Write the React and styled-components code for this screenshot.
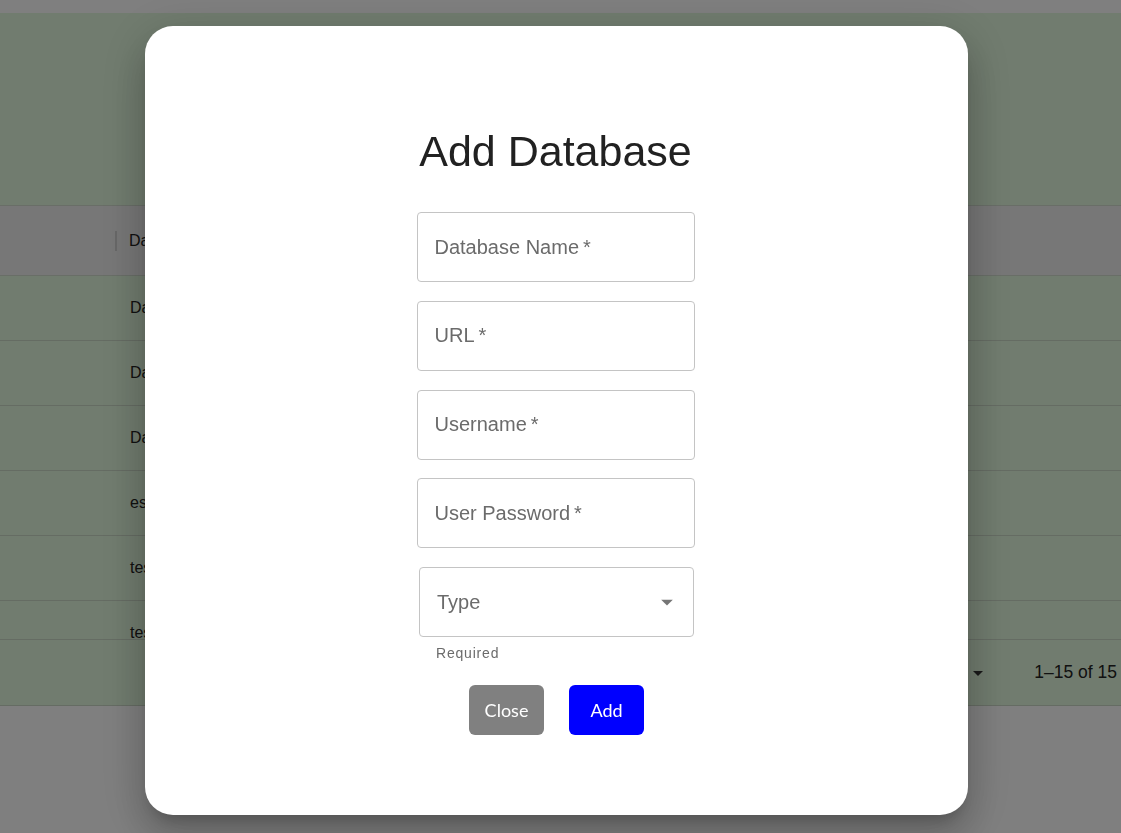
import React from 'react';
import styled, { createGlobalStyle } from 'styled-components';

const GlobalStyle = createGlobalStyle`
  html, body {
    margin: 0;
    padding: 0;
    background: #ffffff;
    font-family: "Liberation Sans", Arial, sans-serif;
    overflow: hidden;
  }
`;

// page behind the dialog
const Page = styled.div`
  width: 1121px;
  height: 833px;
  padding-top: 13px;
  box-sizing: border-box;
`;

const Banner = styled.div`
  height: 192px;
  background: #e2f8de;
`;

const Grid = styled.div`
  display: flex;
  flex-direction: column;
  border-top: 1px solid #d2dccf;
`;

const HeaderRow = styled.div`
  display: flex;
  align-items: center;
  height: 69px;
  background: #efefef;
  border-bottom: 1px solid #d2dccf;
  font-size: 16px;
  color: #222;
`;

const Separator = styled.span`
  width: 2px;
  height: 20px;
  margin-left: 115px;
  margin-right: 12px;
  background: #cfcfcf;
`;

const Body = styled.div`
  height: 363px;
  overflow: hidden;
  background: #e2f8de;
`;

const Row = styled.div`
  display: flex;
  align-items: center;
  height: 64px;
  padding-left: 130px;
  border-bottom: 1px solid #cbd8c7;
  font-size: 16px;
  color: #222;
`;

const Footer = styled.div`
  display: flex;
  align-items: center;
  justify-content: flex-end;
  height: 65px;
  padding-right: 4px;
  background: #e2f8de;
  border-top: 1px solid #cbd8c7;
  border-bottom: 1px solid #cbd8c7;
  font-size: 17.5px;
  color: #222;
`;

const PerPage = styled.div`
  display: flex;
  align-items: center;
  gap: 8px;
  margin-right: 44px;
  font-size: 15px;
`;

// dialog
const Overlay = styled.div`
  position: fixed;
  inset: 0;
  display: flex;
  align-items: flex-start;
  padding: 26px 0 0 145px;
  background: rgba(0, 0, 0, 0.5);
`;

const Modal = styled.div`
  width: 823px;
  height: 789px;
  box-sizing: border-box;
  padding: 100px 2px 0 0;
  display: flex;
  flex-direction: column;
  align-items: center;
  background: #ffffff;
  border-radius: 28px;
  box-shadow: 0 11px 15px -7px rgba(0, 0, 0, 0.2),
    0 24px 38px 3px rgba(0, 0, 0, 0.14), 0 9px 46px 8px rgba(0, 0, 0, 0.12);
`;

const Title = styled.h1`
  margin: 0 0 36px 0;
  font-size: 43px;
  line-height: 50px;
  font-weight: 400;
  color: #212121;
`;

const Field = styled.div`
  width: ${(p) => p.$width || 278}px;
  height: 70px;
  box-sizing: border-box;
  margin-bottom: ${(p) => p.$gap ?? 18.75}px;
  margin-left: ${(p) => p.$shift || 0}px;
  padding: 0 ${(p) => p.$padRight || 20}px 0 17px;
  display: flex;
  align-items: center;
  justify-content: space-between;
  border: 1px solid #c4c4c4;
  border-radius: 4px;
  font-size: 20px;
  color: #6b6b6b;
`;

const Helper = styled.div`
  width: 275px;
  box-sizing: border-box;
  margin-left: 2px;
  padding-left: 17px;
  margin-top: 8px;
  font-size: 14px;
  line-height: 16px;
  letter-spacing: 0.8px;
  color: #6b6b6b;
`;

const Actions = styled.div`
  display: flex;
  gap: 25px;
  margin-left: 2px;
  margin-top: 24px;
`;

const Button = styled.button`
  width: 75px;
  height: 50px;
  border: none;
  border-radius: 6px;
  background: ${(p) => (p.$primary ? '#0000ff' : '#808080')};
  color: #ffffff;
  font-family: Lato, "Open Sans", sans-serif;
  font-size: 18px;
  cursor: pointer;
`;

const Caret = ({ size = 28, color = 'rgba(0,0,0,0.54)' }) => (
  <svg width={size} height={size} viewBox="0 0 24 24">
    <path d="M7 10l5 5 5-5z" fill={color} />
  </svg>
);

const rows = ['Database1', 'Database2', 'Database3', 'estest', 'test', 'test2'];

const App = () => {
  return (
    <>
      <GlobalStyle />
      <Page>
        <Banner />
        <Grid>
          <HeaderRow>
            <Separator />
            Database Name
          </HeaderRow>
          <Body>
            {rows.map((r) => (
              <Row key={r}>{r}</Row>
            ))}
          </Body>
          <Footer>
            <PerPage>
              Rows per page: 15
              <Caret size={24} color="#333" />
            </PerPage>
            1–15 of 15
          </Footer>
        </Grid>
      </Page>
      <Overlay>
        <Modal>
          <Title>Add Database</Title>
          <Field>Database Name&thinsp;*</Field>
          <Field>URL&thinsp;*</Field>
          <Field>Username&thinsp;*</Field>
          <Field>User Password&thinsp;*</Field>
          <Field $width={275} $gap={0} $shift={2} $padRight={12}>
            Type
            <Caret />
          </Field>
          <Helper>Required</Helper>
          <Actions>
            <Button>Close</Button>
            <Button $primary>Add</Button>
          </Actions>
        </Modal>
      </Overlay>
    </>
  );
};

export default App;
